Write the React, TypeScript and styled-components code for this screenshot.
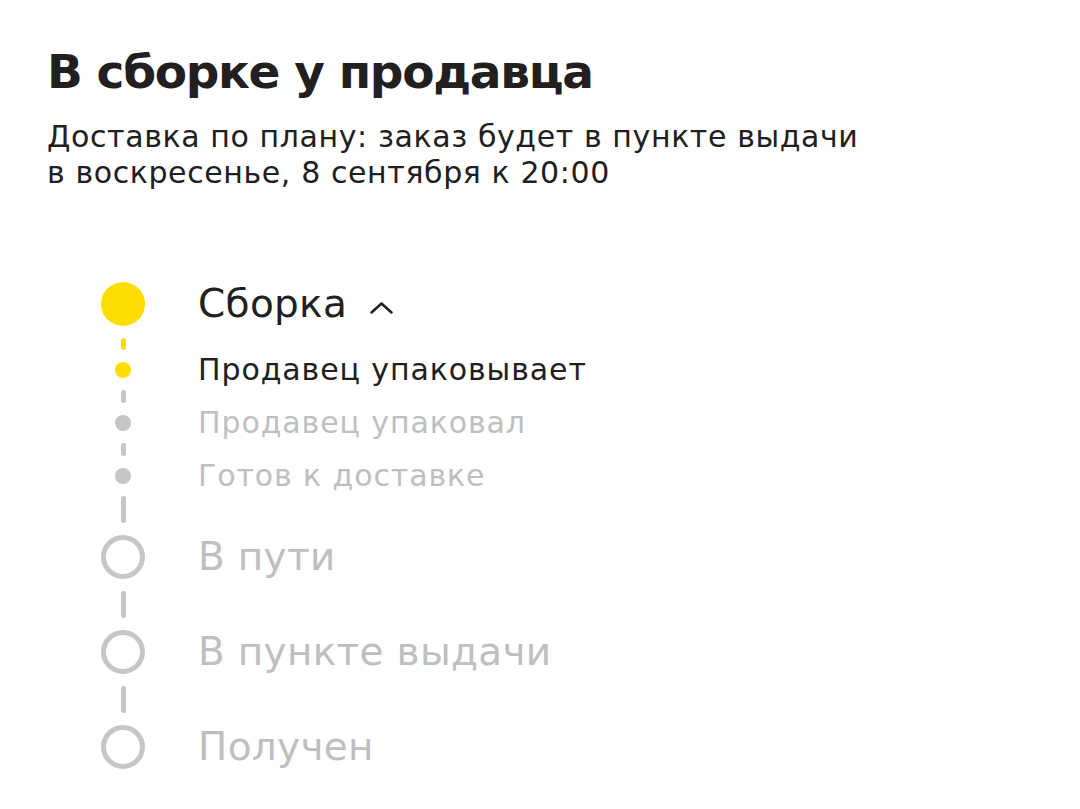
import React from "react";
import styled, { createGlobalStyle } from "styled-components";

const GlobalStyle = createGlobalStyle`
  html, body {
    margin: 0;
    padding: 0;
    background: #ffffff;
  }
  body {
    font-family: "DejaVu Sans", Inter, sans-serif;
    color: #21201f;
  }
`;

const YELLOW = "#ffdd00";
const GREY = "#c6c6c6";
const GREY_TEXT = "#bfbfbf";

const Page = styled.div`
  padding: 44px 47px 0;
  width: 1080px;
  height: 809px;
  box-sizing: border-box;
  overflow: hidden;
`;

const Title = styled.h1`
  margin: 0;
  font-size: 47px;
  line-height: 56px;
  font-weight: 700;
  letter-spacing: -1.3px;
`;

const Subtitle = styled.p`
  margin: 19px 0 0;
  font-size: 30px;
  line-height: 36px;
  font-weight: 400;
  letter-spacing: 0.6px;
`;

const Timeline = styled.div`
  display: flex;
  flex-direction: column;
  gap: 12px;
  margin-top: 91px;
  padding-left: 51px;
`;

const Row = styled.div<{ $h: number }>`
  display: flex;
  align-items: center;
  height: ${(p) => p.$h}px;
`;

const MarkerCell = styled.div`
  width: 50px;
  display: flex;
  justify-content: center;
  align-items: center;
  flex-shrink: 0;
`;

const Dot = styled.div<{ $size: number; $color: string }>`
  width: ${(p) => p.$size}px;
  height: ${(p) => p.$size}px;
  border-radius: 50%;
  background: ${(p) => p.$color};
`;

const Ring = styled.div`
  width: 44px;
  height: 44px;
  border-radius: 50%;
  box-sizing: border-box;
  border: 5px solid ${GREY};
`;

const Dash = styled.div<{ $len: number; $color: string }>`
  width: 5px;
  height: ${(p) => p.$len}px;
  border-radius: 3px;
  background: ${(p) => p.$color};
`;

const Label = styled.div<{ $big?: boolean; $muted?: boolean }>`
  margin-left: 50px;
  font-size: ${(p) => (p.$big ? 39 : 30)}px;
  line-height: ${(p) => (p.$big ? 46 : 36)}px;
  letter-spacing: ${(p) => (p.$big ? 0.3 : 0.9)}px;
  color: ${(p) => (p.$muted ? GREY_TEXT : "#21201f")};
  white-space: nowrap;
  display: flex;
  align-items: center;
`;

const Chevron = styled.svg`
  margin-left: 23px;
  margin-top: 7px;
`;

const Connector = ({ len, color }: { len: number; color: string }) => (
  <Row $h={len}>
    <MarkerCell>
      <Dash $len={len} $color={color} />
    </MarkerCell>
  </Row>
);

const subSteps = [
  { text: "Продавец упаковывает", active: true },
  { text: "Продавец упаковал", active: false },
  { text: "Готов к доставке", active: false },
];

const bigSteps = ["В пути", "В пункте выдачи", "Получен"];

export default function App() {
  return (
    <>
      <GlobalStyle />
      <Page>
        <Title>В сборке у продавца</Title>
        <Subtitle>
          Доставка по плану: заказ будет в пункте выдачи
          <br />в воскресенье, 8 сентября к 20:00
        </Subtitle>

        <Timeline>
          <Row $h={44}>
            <MarkerCell>
              <Dot $size={44} $color={YELLOW} />
            </MarkerCell>
            <Label $big>
              Сборка
              <Chevron width="23" height="12" viewBox="0 0 23 12">
                <path
                  d="M1.5 10.5 L11.5 1.5 L21.5 10.5"
                  fill="none"
                  stroke="#21201f"
                  strokeWidth="2.5"
                  strokeLinecap="round"
                  strokeLinejoin="round"
                />
              </Chevron>
            </Label>
          </Row>

          {subSteps.map((s, i) => (
            <React.Fragment key={s.text}>
              <Connector len={i === 0 ? 12 : 13} color={i === 0 ? YELLOW : GREY} />
              <Row $h={16}>
                <MarkerCell>
                  <Dot $size={16} $color={s.active ? YELLOW : GREY} />
                </MarkerCell>
                <Label $muted={!s.active}>{s.text}</Label>
              </Row>
            </React.Fragment>
          ))}

          {bigSteps.map((t) => (
            <React.Fragment key={t}>
              <Connector len={27} color={GREY} />
              <Row $h={44}>
                <MarkerCell>
                  <Ring />
                </MarkerCell>
                <Label $big $muted>
                  {t}
                </Label>
              </Row>
            </React.Fragment>
          ))}
        </Timeline>
      </Page>
    </>
  );
}
